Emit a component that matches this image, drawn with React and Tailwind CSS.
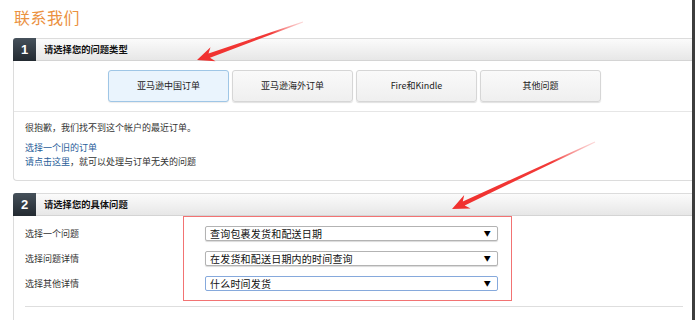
import React from "react";

const F = { fontFamily: '"Noto Sans CJK SC", "Noto Sans", sans-serif' };

function arrowPoints(tx, ty, sx, sy) {
  const dx = sx - tx, dy = sy - ty;
  const L = Math.hypot(dx, dy);
  const ux = dx / L, uy = dy / L;
  const nx = -uy, ny = ux;
  const headLen = 17, headHalf = 7.5, notch = 13, shaft = 2.2, tail = 0.4;
  const p = (a, b) => `${(tx + ux * a + nx * b).toFixed(1)},${(ty + uy * a + ny * b).toFixed(1)}`;
  return [
    p(0, 0),
    p(headLen, headHalf),
    p(notch, shaft),
    p(L, tail),
    p(L, -tail),
    p(notch, -shaft),
    p(headLen, -headHalf),
  ].join(" ");
}

function Arrow({ id, tx, ty, sx, sy }) {
  return (
    <g>
      <defs>
        <linearGradient id={id} gradientUnits="userSpaceOnUse" x1={tx} y1={ty} x2={sx} y2={sy}>
          <stop offset="0" stopColor="#f0302e" />
          <stop offset="0.7" stopColor="#f23a38" />
          <stop offset="1" stopColor="#f7a0a0" stopOpacity="0.4" />
        </linearGradient>
      </defs>
      <polygon points={arrowPoints(tx, ty, sx, sy)} fill={`url(#${id})`} />
    </g>
  );
}

function Header({ n, title }) {
  return (
    <div className="flex h-[23px]">
      <div className="w-[23px] h-[23px] rounded-tl-[3px] bg-gradient-to-b from-[#46515b] to-[#232a31] text-white font-bold text-[13px] flex items-center justify-center" style={{ fontFamily: '"Liberation Sans", Arial, sans-serif' }}>
        {n}
      </div>
      <div className="flex-1 border-t border-b border-t-[#dcdcdc] border-b-[#d4d4d4] bg-gradient-to-b from-[#fbfbfb] to-[#e7e7e7] flex items-center pl-[8px] text-[9.3px] font-bold text-[#111]">
        {title}
      </div>
    </div>
  );
}

function Btn({ children, active }) {
  return (
    <div
      className={
        "w-[121px] h-[32px] rounded-[3px] border flex items-center justify-center text-[9px] text-[#222] " +
        (active
          ? "border-[#9fc6e6] bg-[#eaf4fd] shadow-[0_1px_1px_rgba(0,0,0,0.08)]"
          : "border-[#d6d6d6] bg-gradient-to-b from-[#fafafa] to-[#efefef] shadow-[0_1px_1px_rgba(0,0,0,0.12)]")
      }
    >
      {children}
    </div>
  );
}

function Sel({ text, active }) {
  return (
    <div
      className={
        "w-[293px] h-[15px] rounded-[2px] border bg-white flex items-center justify-between pl-[4px] pr-[6px] text-[10px] tracking-[0.2px] text-[#111] " +
        (active ? "border-[#86a9dc]" : "border-[#b3b3b3] shadow-[0_1px_1px_rgba(0,0,0,0.15)]")
      }
    >
      <span className="leading-none">{text}</span>
      <span className="text-[7px] leading-none text-black">▼</span>
    </div>
  );
}

export default function App() {
  return (
    <div className="relative flex w-[695px] h-[320px] bg-white overflow-hidden" style={F}>
      <div className="flex-1 pl-[13px]">
        <div className="h-[38px] pt-[7px] pl-[1px] text-[16px] leading-[20px] text-[#eb9140] tracking-[0.5px]">联系我们</div>

        <Header n="1" title="请选择您的问题类型" />
        <div className="h-[120px] border-l border-b border-[#dcdcdc] rounded-bl-[4px]">
          <div className="flex gap-[3px] pl-[94px] pt-[9px]">
            <Btn active>亚马逊中国订单</Btn>
            <Btn>亚马逊海外订单</Btn>
            <Btn>Fire和Kindle</Btn>
            <Btn>其他问题</Btn>
          </div>
          <div className="mt-[9px] border-t border-[#e6e6e6]" />
          <div className="pl-[11px] pt-[9px] text-[9px] leading-[14px] text-[#333]">
            <div>很抱歉，我们找不到这个帐户的最近订单。</div>
            <div className="mt-[6px] text-[#1f5d99]">选择一个旧的订单</div>
            <div>
              <span className="text-[#1f5d99]">请点击这里</span>，就可以处理与订单无关的问题
            </div>
          </div>
        </div>

        <div className="h-[12px]" />
        <Header n="2" title="请选择您的具体问题" />
        <div className="h-[120px] border-l border-[#dcdcdc] pl-[11px]">
          <div className="flex">
            <div className="w-[180px] flex flex-col gap-[10px] pt-[10px] text-[9px] text-[#333]">
              <div className="h-[15px] flex items-center">选择一个问题</div>
              <div className="h-[15px] flex items-center">选择问题详情</div>
              <div className="h-[15px] flex items-center">选择其他详情</div>
            </div>
            <div className="relative flex flex-col gap-[10px] pt-[10px]">
              <Sel text="查询包裹发货和配送日期" />
              <Sel text="在发货和配送日期内的时间查询" />
              <Sel text="什么时间发货" active />
              <div className="absolute left-[-22px] top-[0px] w-[329px] h-[85px] border border-[#f27373]" />
            </div>
          </div>
          <div className="mt-[15px] mr-[9px] border-t border-[#dedede]" />
        </div>
      </div>
      <div className="w-[3px] bg-[#3d3d3d]" />

      <svg className="absolute inset-0 pointer-events-none" width="695" height="320">
        <Arrow id="a1" tx={197} ty={60} sx={303} sy={22} />
        <Arrow id="a2" tx={452} ty={209} sx={595} sy={142} />
      </svg>
    </div>
  );
}
